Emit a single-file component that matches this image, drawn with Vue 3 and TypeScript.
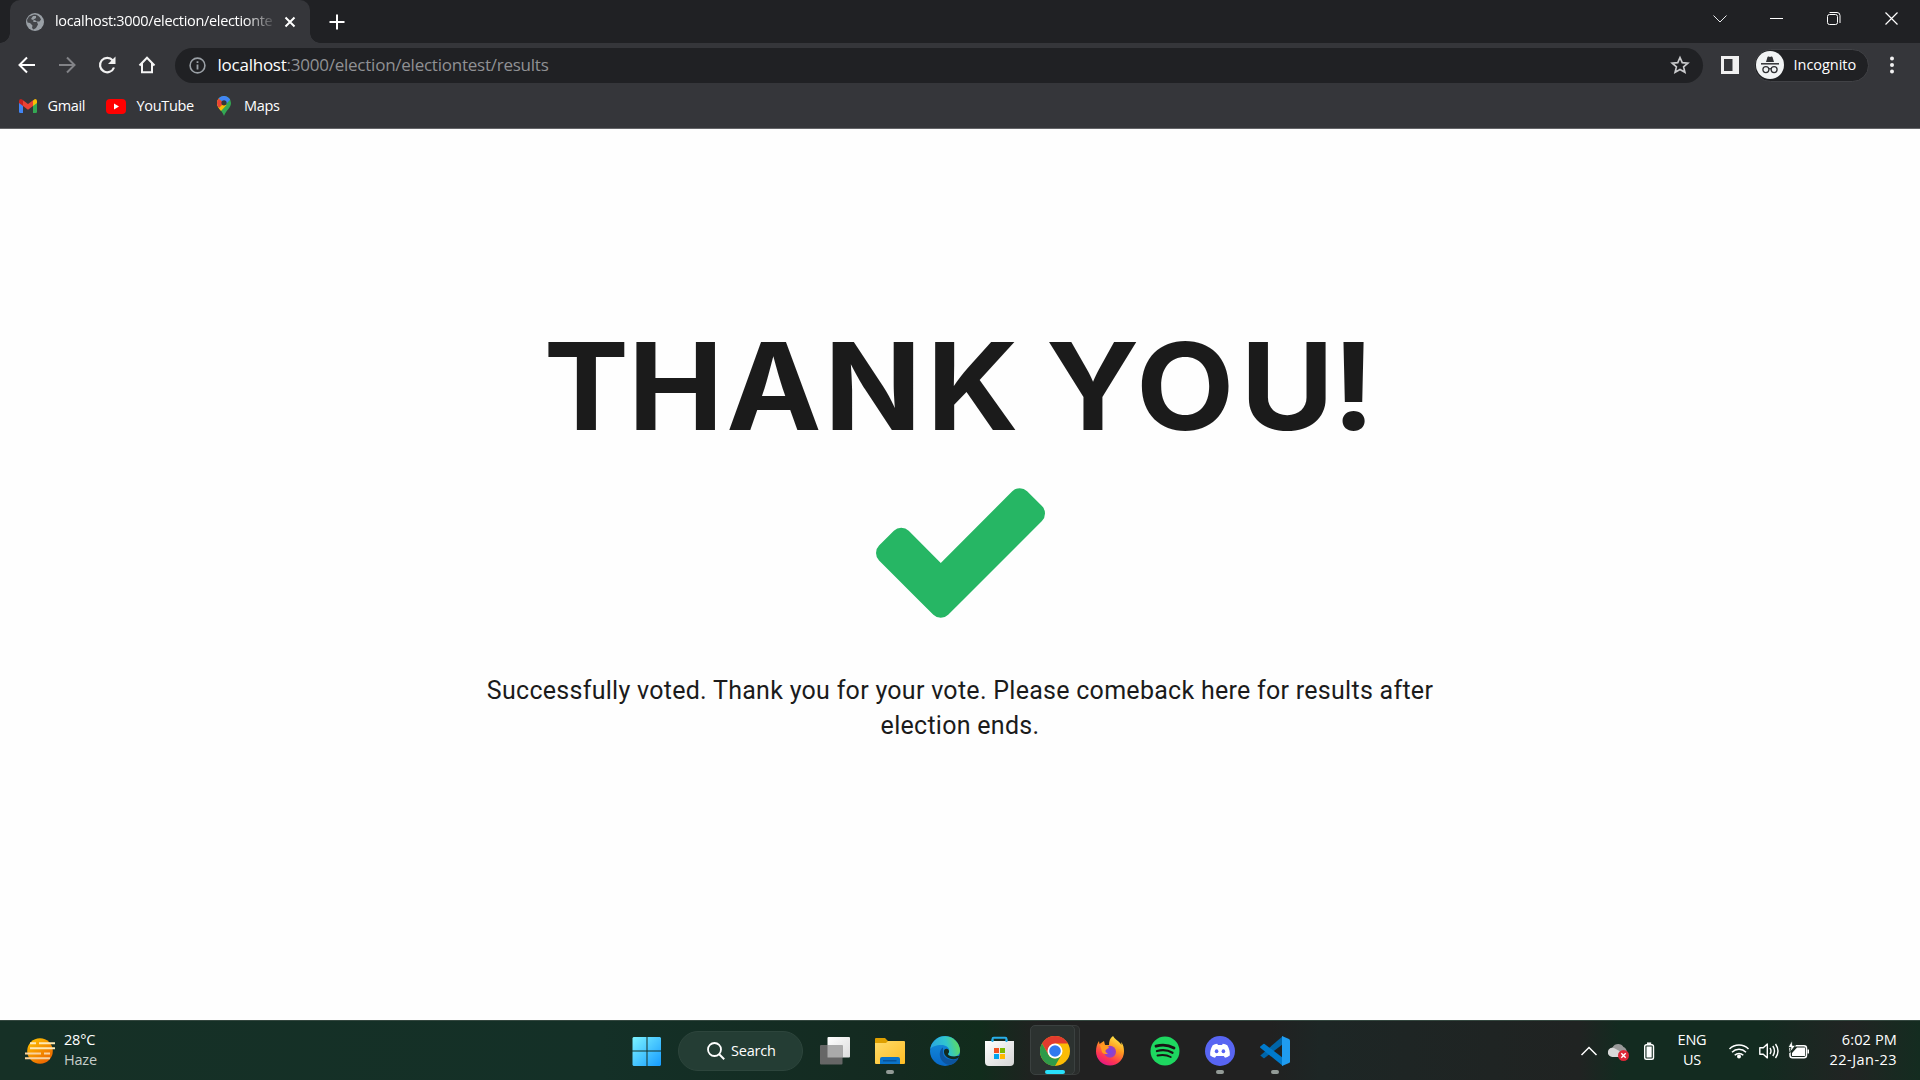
<script setup lang="ts">
const message = 'Successfully voted. Thank you for your vote. Please comeback here for results after election ends.'
</script>

<template>
  <div class="screen">
    <header class="browser">
      <div class="tabs">
        <div class="tab">
          <svg class="favicon" width="18" height="18" viewBox="0 0 18 18"><circle cx="9" cy="9" r="9" fill="#9aa0a6"/><path d="M8 1.500c3.500 0 6 2 7 5l-1.500 2-3 0-1.500-1.500-2 .5 .5 1.500h3.500l1 2.500-2 3.500-2.500 1.500-1.500-1.500 .5-2.500-2.500-2.500-2.500-.5-.5-2.500 2-3.500z" fill="#35363a" opacity=".85"/><path d="M7 3l3 0 0 2-3 2-2-1z" fill="#9aa0a6"/></svg>
          <span class="tab-title">localhost:3000/election/electionte</span>
          <svg class="tab-close" width="12" height="12" viewBox="0 0 12 12"><path d="M1.500 1.500l9 9M10.500 1.500l-9 9" stroke="#fff" stroke-width="2" fill="none"/></svg>
        </div>
        <svg class="new-tab" width="16" height="16" viewBox="0 0 16 16"><path d="M8 .5v15M.5 8h15" stroke="#fff" stroke-width="2"/></svg>
        <div class="window-controls">
          <svg width="57" height="37" viewBox="0 0 57 37"><path d="M22.500 15.500l6.500 6.500 6.500-6.500" fill="none" stroke="#e8eaed" stroke-width="1"/></svg>
          <svg width="57" height="37" viewBox="0 0 57 37"><path d="M22 18.500h13" stroke="#fff" stroke-width="1"/></svg>
          <svg width="57" height="37" viewBox="0 0 57 37"><rect x="22.500" y="14.500" width="10" height="10" rx="2" fill="none" stroke="#fff"/><path d="M24.500 12.500h7.500a3 3 0 0 1 3 3v7.500" fill="none" stroke="#fff"/></svg>
          <svg width="57" height="37" viewBox="0 0 57 37"><path d="M23.500 12.500l12 12M35.500 12.500l-12 12" stroke="#fff" stroke-width="1.200"/></svg>
        </div>
      </div>

      <div class="toolbar">
        <svg width="40" height="34" viewBox="0 0 40 34"><path d="M28 17H13M20 9.500L12.500 17l7.500 7.500" fill="none" stroke="#fff" stroke-width="2"/></svg>
        <svg width="40" height="34" viewBox="0 0 40 34"><path d="M12 17h15M20 9.500l7.500 7.500-7.500 7.500" fill="none" stroke="#828387" stroke-width="2"/></svg>
        <svg width="40" height="34" viewBox="0 0 40 34"><path d="M25.800 12.500a7.200 7.200 0 1 0 1.200 7" fill="none" stroke="#f1f1f1" stroke-width="2.200"/><path d="M28.500 8.500v7.500H21z" fill="#f1f1f1"/></svg>
        <svg width="40" height="34" viewBox="0 0 40 34"><path d="M12.500 17.500L20 9.700l7.500 7.800M15 15v9.200h10V15" fill="none" stroke="#f5f5f5" stroke-width="2"/></svg>
        <div class="omnibox">
          <svg class="info" width="17" height="17" viewBox="0 0 17 17"><circle cx="8.500" cy="8.500" r="7.400" fill="none" stroke="#9aa0a6" stroke-width="1.600"/><path d="M8.500 7.500v5M8.500 4.300v1.800" stroke="#9aa0a6" stroke-width="1.800"/></svg>
          <span class="url"><b>localhost</b>:3000/election/electiontest/results</span>
          <svg class="star" width="20" height="20" viewBox="0 0 24 24"><path d="M12 3l2.700 6.200 6.700.6-5.100 4.400 1.600 6.600L12 17.300l-5.900 3.500 1.600-6.600-5.100-4.400 6.700-.6z" fill="none" stroke="#c9cacc" stroke-width="2"/></svg>
        </div>
        <svg class="side-panel" width="18" height="18" viewBox="0 0 18 18"><path d="M0 0h18v18H0zM3 3v12h8.500V3z" fill="#f1f1f1" fill-rule="evenodd"/></svg>
        <div class="incognito">
          <svg width="28" height="28" viewBox="0 0 28 28"><circle cx="14" cy="14" r="14" fill="#f1f3f4"/><path d="M10 11l1.500-5q.3-.8 1.200-.5l1.300.4 1.300-.4q.9-.3 1.200.5L18 11z" fill="#303134"/><path d="M5 12.800h18" stroke="#303134" stroke-width="1.500"/><g fill="none" stroke="#303134" stroke-width="1.300"><circle cx="9.900" cy="18.600" r="3"/><circle cx="18.100" cy="18.600" r="3"/><path d="M12.800 18q1.200-.8 2.400 0"/></g></svg>
          <span>Incognito</span>
        </div>
        <svg class="more" width="6" height="18" viewBox="0 0 6 18"><g fill="#f1f1f1"><circle cx="3" cy="2.500" r="2"/><circle cx="3" cy="9" r="2"/><circle cx="3" cy="15.500" r="2"/></g></svg>
      </div>

      <nav class="bookmarks">
        <a><svg width="18" height="14" viewBox="0 0 18 14"><path d="M0 2v10.700Q0 14 1.300 14H4V5z" fill="#4285f4"/><path d="M18 2v10.700q0 1.300-1.300 1.300H14V5z" fill="#34a853"/><path d="M14 1.500V7l4-3V2q0-2-2-2z" fill="#fbbc04"/><path d="M0 2v2l4 3V1L2 0Q0 0 0 2z" fill="#c5221f"/><path d="M4 7V1.200l5 3.800 5-3.800V7l-5 3.800z" fill="#ea4335"/></svg><span class="gmail">Gmail</span></a>
        <a><svg width="20" height="15" viewBox="0 0 20 15"><rect width="20" height="15" rx="4" fill="#f00"/><path d="M8 4.500v6l5-3z" fill="#fff"/></svg><span class="youtube">YouTube</span></a>
        <a><svg width="14" height="20" viewBox="0 0 14 20"><path d="M7 0a7 7 0 0 1 7 7c0 5-5 7-7 13C5 14 0 12 0 7a7 7 0 0 1 7-7z" fill="#34a853"/><path d="M1.600 2.500L9.500 9 4 15C2 12.500 0 10.500 0 7q0-2.800 1.600-4.500z" fill="#fbbc04"/><path d="M1.600 2.500L7 7 2 12Q0 9.500 0 7q0-2.800 1.600-4.500z" fill="#ea4335"/><path d="M1.600 2.500A7 7 0 0 1 13.200 3.700L9 8 5 5.300z" fill="#4285f4"/><circle cx="7" cy="6.800" r="2.600" fill="#35363a"/></svg><span class="maps">Maps</span></a>
      </nav>
    </header>

    <main class="page">
      <h1>
        <svg width="900" height="150" viewBox="-38 0 900 150"><text transform="scale(1.06 1)" y="115" x="-3.900 75.500 168.100 260.600 357.300 440 469.800 554.800 653.200 739.700">THANK YOU!</text></svg>
      </h1>
      <svg class="check" width="169" height="130" viewBox="121 334 1550 1188"><path fill="#26b664" d="M1671 566q0 40-28 68l-724 724-136 136q-28 28-68 28t-68-28l-136-136-362-362q-28-28-28-68t28-68l136-136q28-28 68-28t68 28l294 295 656-657q28-28 68-28t68 28l136 136q28 28 28 68z"/></svg>
      <p>{{ message }}</p>
    </main>

    <footer class="taskbar">
      <div class="weather">
        <svg width="30" height="26" viewBox="0 0 30 26"><defs><linearGradient id="sun" x1="0" y1="0" x2=".7" y2="1"><stop stop-color="#ffc800"/><stop offset="1" stop-color="#ec6500"/></linearGradient></defs><circle cx="15" cy="13" r="12.800" fill="url(#sun)"/><g stroke="#ffe9b4" stroke-width="2"><path d="M5 5.300h6M14 5.300h16M5 10.200h25"/><path d="M0 15.500h16M19 15.500h6M0 20.300h25" stroke="#f9d3a0"/></g></svg>
        <div><span class="temp">28°C</span><span class="haze">Haze</span></div>
      </div>
      <div class="app"><svg width="30" height="30" viewBox="0 0 30 30"><defs><linearGradient id="win" x1="0" y1="0" x2="1" y2="1" gradientUnits="objectBoundingBox"><stop stop-color="#7cf3ff"/><stop offset="1" stop-color="#159bff"/></linearGradient></defs><path fill="url(#win)" d="M1.500 1H14.500v13.500H.5V2zM15.500 1h12.500l1 1v12.500H15.500zM.5 15.500H14.500V30H1.500l-1-1zM15.500 15.500h13.500V29l-1 1H15.500z"/></svg></div>
      <div class="search"><svg width="18" height="18" viewBox="0 0 18 18"><circle cx="7.500" cy="7.500" r="6.500" fill="none" stroke="#fff" stroke-width="1.800"/><path d="M12.200 12.200l5 5" stroke="#fff" stroke-width="2"/></svg><span>Search</span></div>
      <div class="app"><svg width="30" height="30" viewBox="0 0 30 30"><defs><linearGradient id="tv" x2="1" y2="1"><stop stop-color="#fff"/><stop offset="1" stop-color="#dcdcdc"/></linearGradient></defs><rect x="7.500" y="1" width="22.500" height="20.500" rx="1" fill="url(#tv)"/><rect y="9" width="22.500" height="19.500" rx="1" fill="#666"/><path d="M7.500 9h15v12.500h-15z" fill="#aaa"/></svg></div>
      <div class="app running"><svg width="30" height="30" viewBox="0 0 30 30"><defs><linearGradient id="fo" x2="1" y2="1"><stop stop-color="#ffdb69"/><stop offset="1" stop-color="#ffbd24"/></linearGradient></defs><path d="M0 3q0-1 1-1h9l3 3h16v7H0z" fill="#dfa000"/><path d="M0 7h11l2-2h16q1 0 1 1v21q0 1-1 1H1q-1 0-1-1z" fill="url(#fo)"/><path d="M5 28v-5q0-2 2-2h16q2 0 2 2v5z" fill="#0b73c9"/><path d="M8 24.800h13.500" stroke="#084a8d" stroke-width="1.200"/></svg></div>
      <div class="app"><svg width="30" height="30" viewBox="0 0 30 30"><defs><linearGradient id="e1" x1="0" y1=".5" x2="1" y2=".3"><stop stop-color="#2aa5e2"/><stop offset=".55" stop-color="#30c5cf"/><stop offset="1" stop-color="#63de52"/></linearGradient><linearGradient id="e2" x2="0" y2="1"><stop stop-color="#1592dd"/><stop offset="1" stop-color="#0868c8"/></linearGradient></defs><circle cx="15" cy="15" r="15" fill="url(#e2)"/><path d="M.2 13A15 15 0 0 1 30 14.500c0 4-3 6-6.500 6-3.500 0-5.500-1.300-5.500-2.300 0-.7 1.200-1.200 1.200-3.400 0-3.600-3.500-5.800-7.700-5.800C6 9 1.500 11 .2 13z" fill="url(#e1)"/><path d="M13 11.500c-6 4-3.500 16.800 7.500 17.500 3.700-1 6.500-3.600 8-6.500-7 3.400-15.500 0-15.500-6z" fill="#0d559f"/><path d="M19 15c.5 2-1.500 2.500-1 3.300.6 1.800 5 3 8.500 1.700l3 0c-1 2.500-3.500 3.200-6 3.200-5.500 0-10-3.700-9.500-8.200.4-3 4.500-3 5 0z" fill="#132b20"/></svg></div>
      <div class="app"><svg width="30" height="30" viewBox="0 0 30 30"><defs><linearGradient id="st" x2="1" y2="1"><stop stop-color="#fff"/><stop offset="1" stop-color="#d5d5d5"/></linearGradient></defs><path d="M7.500 8V3q0-1.200 1.200-1.200h11.600Q21.500 1.800 21.500 3v5" fill="none" stroke="#28afea" stroke-width="2"/><path d="M0 5h29v21q0 4-4 4H4q-4 0-4-4z" fill="url(#st)"/><path d="M7.500 6V3.200M21.500 6V3.200" stroke="#28afea" stroke-width="1.800"/><path d="M9 12h5v5H9z" fill="#f25022"/><path d="M15 12h5v5h-5z" fill="#7fba00"/><path d="M9 18h5v5H9z" fill="#00a4ef"/><path d="M15 18h5v5h-5z" fill="#ffb900"/></svg></div>
      <div class="app current running"><svg width="30" height="30" viewBox="0 0 30 30"><circle cx="15" cy="15" r="15" fill="#fbbc05"/><path d="M2 7.500A15 15 0 0 1 28 7.500H15L8.500 18.750z" fill="#e33b2e"/><path d="M2 7.500l6.500 11.250A7.500 7.500 0 0 0 21.500 18.750L15 30A15 15 0 0 1 2 7.500z" fill="#2f9a49"/><circle cx="15" cy="15" r="7.500" fill="#fff"/><circle cx="15" cy="15" r="5.800" fill="#3079ee"/></svg></div>
      <div class="app"><svg width="30" height="30" viewBox="0 0 30 30"><defs><linearGradient id="ff" x1=".8" y1="0" x2=".3" y2="1"><stop stop-color="#fff34f"/><stop offset=".4" stop-color="#ff9a1f"/><stop offset=".75" stop-color="#ff3750"/><stop offset="1" stop-color="#e31587"/></linearGradient><radialGradient id="fp"><stop stop-color="#7644e8"/><stop offset="1" stop-color="#a13fb6"/></radialGradient></defs><path d="M18 0c1.500 3 5 4.500 7 7l1.500 2-.3-3C28.500 9 29 12 29 15.500a14 14 0 0 1-28 0C1 11 2 8 4 5l.5 3L9 5l1 4 4 0c0-4 1-7 4-9z" fill="url(#ff)"/><circle cx="15" cy="15.800" r="6" fill="url(#fp)"/><path d="M5 9c2-1 5-.5 6.500.5L14 11c-.3 2-3.500 2-3.500 4 0 1.500 1 2 2.500 2.200-3 1.800-5 .3-6-1.200z" fill="#ff9a1f"/></svg></div>
      <div class="app"><svg width="30" height="30" viewBox="0 0 30 30"><circle cx="15" cy="15" r="14.500" fill="#1ed760"/><g fill="none" stroke="#191414" stroke-linecap="round"><path d="M6 10.200c6-1.700 12.500-1.200 18 1.800" stroke-width="2.800"/><path d="M7 15c5.500-1.500 11-.9 15.500 1.700" stroke-width="2.300"/><path d="M7.500 19.500c4.800-1 9.500-.6 13.200 1.500" stroke-width="1.900"/></g></svg></div>
      <div class="app running"><svg width="30" height="30" viewBox="0 0 30 30"><circle cx="15" cy="15" r="15" fill="#5865f2"/><path d="M12.200 7.800l.8 1.200h4l.8-1.200c1.700.2 3.200.7 4.500 1.500 2 3.300 2.800 6.700 2.500 10.200-1.600 1.200-3.200 1.900-4.800 2.300l-1.200-1.900h-7.600L10 21.800c-1.600-.4-3.200-1.100-4.800-2.300-.3-3.500.5-6.900 2.500-10.200 1.300-.8 2.800-1.300 4.500-1.500z" fill="#fff"/><ellipse cx="11.600" cy="15.300" rx="1.800" ry="2" fill="#5865f2"/><ellipse cx="18.400" cy="15.300" rx="1.800" ry="2" fill="#5865f2"/></svg></div>
      <div class="app running"><svg width="30" height="30" viewBox="0 0 30 30"><path d="M.3 19.400l3 2.600q.6.500 1.300 0L23 8V0z" fill="#0065a9"/><path d="M.3 10.600l3-2.600q.6-.5 1.300 0L23 22v8L.3 11.800q-.5-.6 0-1.200z" fill="#007acc"/><path d="M22 0l7 3q1 .5 1 1.500v21q0 1-1 1.500l-7 3V0z" fill="#1f9cf0"/></svg></div>
      <div class="tray">
        <svg width="30" height="30" viewBox="0 0 30 30"><path d="M7.500 19L15 11.500l7.500 7.500" fill="none" stroke="#fff" stroke-width="1.500"/></svg>
        <svg width="30" height="30" viewBox="0 0 30 30"><path d="M9 20.500a4.500 4.500 0 0 1-.5-9c2-4.500 9-4.500 11-.5 3 1 4 5 3 8z" fill="#999"/><path d="M9 21a4.600 4.600 0 1 1 1.500-8.700L19 17l-3 4z" fill="#d8d8d8"/><circle cx="19.500" cy="19.500" r="5.500" fill="#dc2637"/><path d="M17.300 17.300l4.400 4.400M21.700 17.300l-4.400 4.400" stroke="#fff" stroke-width="1.400"/></svg>
        <svg width="30" height="30" viewBox="0 0 30 30"><rect x="10.700" y="8.700" width="8.800" height="14.600" rx="1.800" fill="none" stroke="#fff" stroke-width="1.400"/><path d="M13 7.200h4.200" stroke="#fff" stroke-width="1.500"/><path d="M12.500 10.500h5.200v11h-5.200z" fill="#fff"/></svg>
        <div class="lang"><span>ENG</span><span>US</span></div>
        <svg width="30" height="30" viewBox="0 0 30 30"><g fill="none" stroke="#fff" stroke-width="1.500"><path d="M5.500 13a13.500 13.500 0 0 1 19 0M8 16.200a10 10 0 0 1 14 0M10.700 19.200a6.200 6.200 0 0 1 8.600 0"/></g><circle cx="15" cy="20.500" r="2" fill="#fff"/></svg>
        <svg width="30" height="30" viewBox="0 0 30 30"><g fill="none" stroke="#fff" stroke-width="1.400"><path d="M5.800 11.800h3.500l4-3.700v13.800l-4-3.700H5.800z" stroke-linejoin="round"/><path d="M16 12q2 3 0 6M18.800 10q3.400 5 0 10M21.500 8q5 7 0 14"/></g></svg>
        <svg width="30" height="30" viewBox="0 0 30 30"><rect x="6" y="9.700" width="16.500" height="12" rx="2.500" fill="none" stroke="#fff" stroke-width="1.500"/><path d="M13 11.500h8v8.500H8v-3z" fill="#fff"/><path d="M23.500 13.500h1.500v4h-1.500z" fill="#fff"/><path d="M8 4.500l-4 7h3L5.500 17l6-7.500H8.500z" fill="#fff" stroke="#132b20" stroke-width=".8"/></svg>
        <div class="clock"><span class="time">6:02 PM</span><span class="date">22-Jan-23</span></div>
      </div>
    </footer>
  </div>
</template>

<style>
html, body { margin: 0; background: #fefefe; overflow: hidden; }
</style>

<style scoped>
.screen { width: 1920px; height: 1080px; display: flex; flex-direction: column; overflow: hidden; font-family: "Open Sans", "Noto Sans", sans-serif; font-size: 14.5px; color: #fff; }
svg { display: block; flex: none; }
span { white-space: nowrap; }
.browser { height: 128px; flex: none; background: #35363a; border-bottom: 1px solid #646568; }
.tabs { height: 43px; background: #202124; display: flex; align-items: center; padding-left: 10px; }
.tab { position: relative; width: 300px; height: 43px; background: #35363a; border-radius: 10px 10px 0 0; display: flex; align-items: center; box-sizing: border-box; padding-left: 16px; }
.tab::before, .tab::after { content: ""; position: absolute; bottom: 0; width: 10px; height: 10px; }
.tab::before { left: -10px; background: radial-gradient(circle at 0 0, transparent 9.5px, #35363a 10px); }
.tab::after { right: -10px; background: radial-gradient(circle at 100% 0, transparent 9.5px, #35363a 10px); }
.tab-title { width: 220px; margin-left: 11px; padding-bottom: 2px; letter-spacing: -.32px; mask-image: linear-gradient(90deg, #000 190px, transparent 222px); }
.tab-close { margin-left: 9px; }
.new-tab { margin-left: 19px; }
.window-controls { display: flex; margin-left: auto; align-self: flex-start; padding-right: 1px; }
.toolbar { height: 44px; display: flex; align-items: center; padding-left: 7px; }
.omnibox { width: 1528px; height: 35px; margin-left: 8px; border-radius: 18px; background: #202124; display: flex; align-items: center; box-sizing: border-box; padding: 0 13px 0 14px; }
.url { margin-left: 11.5px; padding-bottom: 1px; font-size: 17px; letter-spacing: -.24px; color: #909194; }
.url b { font-weight: 400; color: #fff; }
.star { margin-left: auto; }
.side-panel { margin-left: 18px; }
.incognito { width: 115px; height: 33px; box-sizing: border-box; margin-left: 15px; border: 1px solid #414246; border-radius: 17px; background: #202124; display: flex; align-items: center; padding-left: 1px; }
.incognito span { margin-left: 9.5px; padding-bottom: 2px; letter-spacing: -.03px; }
.more { margin-left: 20px; }
.bookmarks { height: 38px; display: flex; align-items: center; padding-left: 19px; }
.bookmarks a { display: flex; align-items: center; }
.bookmarks span { margin-left: 10.5px; padding-bottom: 1px; letter-spacing: -.33px; }
.gmail { width: 58.5px; }
.youtube { width: 80.5px; }
.bookmarks .maps { margin-left: 13px; }
.page { flex: 1; background: #fefefe; color: #1b1b1b; display: flex; flex-direction: column; align-items: center; }
h1 { margin: 186px 0 0; width: 900px; height: 150px; font: 700 120.500px "Inter", sans-serif; }
h1 text { fill: #1b1b1b; }
.check { margin-top: 23px; }
p { width: 960px; margin: 55px 0 0; text-align: center; font: 400 25px/35px "Roboto", sans-serif; letter-spacing: .28px; }
.taskbar { height: 60px; flex: none; box-sizing: border-box; border-top: 1px solid #34473f; display: flex; align-items: center; background: linear-gradient(90deg, #163026 0, #143027 600px, #142a20 900px, #112c1c 980px, #212121 1040px, #212121 1270px, #1d2625 1320px, #202322 1580px, #132b20 1620px, #132b20 1760px, #212423 1850px, #142c20 1920px); }
.weather { width: 619px; box-sizing: border-box; padding-left: 25px; display: flex; align-items: center; }
.weather div { display: flex; flex-direction: column; line-height: 20px; margin-left: 9px; padding-bottom: 2px; }
.haze { color: #c5cdc9; }
.temp, .haze { letter-spacing: -.2px; }
.app { position: relative; width: 55px; height: 59px; display: flex; align-items: center; justify-content: center; flex: none; }
.app svg { position: relative; }
.running::after { content: ""; position: absolute; left: 23.5px; bottom: 6px; width: 8px; height: 4px; border-radius: 2px; background: #939b97; }
.current::before { content: ""; position: absolute; left: 2.5px; top: 4px; width: 45px; height: 50px; box-sizing: border-box; border: 1px solid #3b4140; border-radius: 5px; background: #2c3230; box-shadow: 5px 0 0 -1px #292c2b, 5px 0 0 0 #393c3b; }
.current.running::after { left: 17.5px; width: 20px; background: #29dffa; }
.search { width: 125px; height: 40px; margin: 0 4px 0 4px; border-radius: 20px; border: 1px solid #2d453c; box-sizing: border-box; background: #243d34; display: flex; align-items: center; padding-left: 28px; }
.search span { margin-left: 6px; letter-spacing: -.2px; }
.tray { margin-left: auto; display: flex; align-items: center; padding-right: 23px; }
.lang { width: 56px; margin-right: 4px; padding-bottom: 1px; display: flex; flex-direction: column; align-items: center; line-height: 20px; letter-spacing: -.2px; }
.clock { width: 83px; padding-bottom: 2px; display: flex; flex-direction: column; align-items: flex-end; line-height: 20px; }
.time { letter-spacing: .15px; }
.date { letter-spacing: .45px; }
</style>
